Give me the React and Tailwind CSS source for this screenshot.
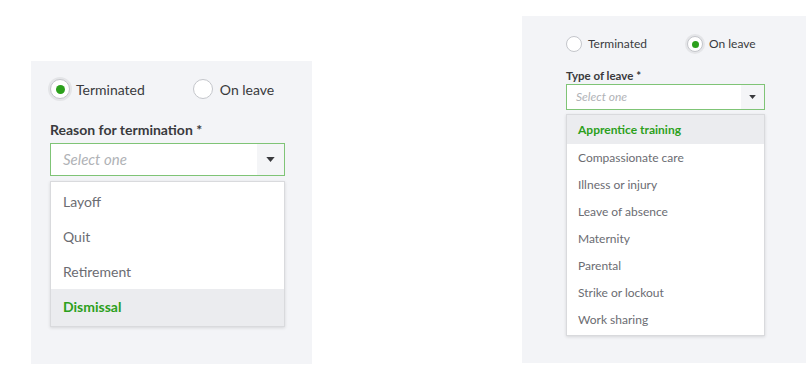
import React from 'react';

const font = { fontFamily: 'Lato, "Open Sans", sans-serif' };

const Caret = ({ className }) => (
  <svg viewBox="0 0 10 6" className={className}>
    <path d="M0 0h10L5 6z" fill="#393a3d" />
  </svg>
);

const App = () => {
  const reasons = ['Layoff', 'Quit', 'Retirement'];
  const leaves = [
    'Compassionate care',
    'Illness or injury',
    'Leave of absence',
    'Maternity',
    'Parental',
    'Strike or lockout',
    'Work sharing',
  ];

  return (
    <div className="w-[810px] h-[378px] bg-white flex items-start" style={font}>
      {/* Termination panel */}
      <div className="ml-[31px] mt-[61px] w-[281px] h-[303px] bg-[#f3f4f7] pl-[19px] pt-[18px] flex flex-col">
        <div className="flex items-center h-[20px]">
          <span className="w-[20px] h-[20px] rounded-full bg-white border border-[#c4c6cb] shadow-[0_0_0_2px_#e4e5e8] flex items-center justify-center">
            <span className="w-[9px] h-[9px] rounded-full bg-[#2ca01c]" />
          </span>
          <span className="ml-[6px] text-[14px] text-[#393a3d]">Terminated</span>
          <span className="ml-[48px] w-[20px] h-[20px] rounded-full bg-white border border-[#c4c6cb]" />
          <span className="ml-[7px] text-[14px] text-[#393a3d]">On leave</span>
        </div>

        <div className="mt-[23px] text-[14px] font-bold text-[#393a3d] leading-[16px]">Reason for termination *</div>

        <div className="mt-[5px] w-[235px] h-[33px] bg-white border border-[#7fc476] flex items-stretch">
          <span className="flex-1 pl-[12px] flex items-center text-[15px] italic text-[#b0b2b6]">Select one</span>
          <span className="w-[27px] bg-[#f4f5f7] flex items-center justify-center">
            <Caret className="w-[9px] h-[5px]" />
          </span>
        </div>

        <div className="mt-[5px] w-[235px] bg-white border border-[#d9dadd] shadow-[0_1px_3px_rgba(0,0,0,0.12)] flex flex-col">
          <div className="h-[2px]" />
          {reasons.map((r) => (
            <div key={r} className="h-[35px] pl-[12px] flex items-center text-[14px] text-[#6b6c72]">{r}</div>
          ))}
          <div className="h-[35px] pl-[12px] flex items-center text-[14px] font-bold text-[#2ca01c] bg-[#ebecef]">Dismissal</div>
          <div className="h-[2px] bg-[#ebecef]" />
        </div>
      </div>

      {/* Leave panel */}
      <div className="ml-[210px] mt-[16px] w-[284px] h-[347px] bg-[#f3f4f7] pl-[44px] pt-[20px] flex flex-col">
        <div className="flex items-center h-[16px]">
          <span className="w-[16px] h-[16px] rounded-full bg-white border border-[#c4c6cb]" />
          <span className="ml-[6px] text-[12px] text-[#393a3d]">Terminated</span>
          <span className="ml-[40px] w-[16px] h-[16px] rounded-full bg-white border border-[#c4c6cb] shadow-[0_0_0_2px_#e4e5e8] flex items-center justify-center">
            <span className="w-[7px] h-[7px] rounded-full bg-[#2ca01c]" />
          </span>
          <span className="ml-[6px] text-[12px] text-[#393a3d]">On leave</span>
        </div>

        <div className="mt-[17px] text-[11.5px] font-bold text-[#393a3d] leading-[13px]">Type of leave *</div>

        <div className="mt-[2px] w-[199px] h-[26px] bg-white border border-[#7fc476] flex items-stretch">
          <span className="flex-1 pl-[9px] flex items-center text-[12px] italic text-[#b0b2b6]">Select one</span>
          <span className="w-[23px] bg-[#f4f5f7] flex items-center justify-center">
            <Caret className="w-[7px] h-[4px]" />
          </span>
        </div>

        <div className="mt-[4px] w-[199px] bg-white border border-[#d9dadd] shadow-[0_1px_3px_rgba(0,0,0,0.12)] flex flex-col">
          <div className="h-[29px] pl-[11px] flex items-center text-[12px] font-bold text-[#2ca01c] bg-[#ebecef]">Apprentice training</div>
          {leaves.map((l) => (
            <div key={l} className="h-[27px] pl-[11px] flex items-center text-[12px] text-[#6b6c72]">{l}</div>
          ))}
          <div className="h-[2px]" />
        </div>
      </div>
    </div>
  );
};

export default App;
